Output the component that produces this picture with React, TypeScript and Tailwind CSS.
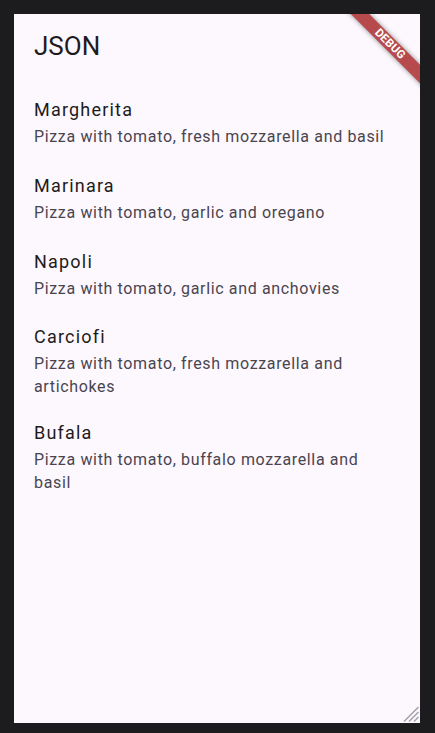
const pizzas = [
  { name: 'Margherita', desc: 'Pizza with tomato, fresh mozzarella and basil' },
  { name: 'Marinara', desc: 'Pizza with tomato, garlic and oregano' },
  { name: 'Napoli', desc: 'Pizza with tomato, garlic and anchovies' },
  { name: 'Carciofi', desc: 'Pizza with tomato, fresh mozzarella and artichokes' },
  { name: 'Bufala', desc: 'Pizza with tomato, buffalo mozzarella and basil' },
];

const DebugBanner = () => (
  <div className="pointer-events-none absolute right-[30px] top-[30px] translate-x-1/2 -translate-y-1/2">
    <div className="flex h-[13px] w-[130px] rotate-45 items-center justify-center bg-[#b64a4c] shadow-[0_0_5px_rgba(0,0,0,0.45)]">
      <span className="text-[11.5px] font-bold leading-none tracking-[0.2px] text-white">DEBUG</span>
    </div>
  </div>
);

const ResizeGrip = () => (
  <svg className="absolute bottom-[1px] right-[1px]" width="16" height="16" viewBox="0 0 16 16">
    <path d="M15.5 1 L1 15.5 M15.5 6 L6 15.5 M15.5 11 L11 15.5" stroke="#a3a2a8" strokeWidth="1.5" />
  </svg>
);

export default function App() {
  return (
    <div className="h-screen w-full bg-[#1c1b1e] pb-[10px] pl-[14px] pr-[15px] pt-[14px] font-['Roboto',sans-serif]">
      <div className="relative h-full overflow-hidden bg-[#fdf7fe]">
        <h1 className="px-[20px] pt-[16px] text-[26px] font-normal leading-[32px] text-[#1d1b20]">JSON</h1>

        {/* list tiles: min height for short ones, grow when subtitle wraps */}
        <ul className="mt-[21px] flex flex-col pl-[20px] pr-[24px]">
          {pizzas.map((p) => (
            <li key={p.name} className="flex min-h-[76px] flex-col justify-center py-[9.5px]">
              <div className="text-[18px] leading-[31px] tracking-[1.2px] text-[#1d1b20]">{p.name}</div>
              <div className="text-[16px] leading-[23px] tracking-[0.65px] text-[#49454f]">{p.desc}</div>
            </li>
          ))}
        </ul>

        <DebugBanner />
        <ResizeGrip />
      </div>
    </div>
  );
}
